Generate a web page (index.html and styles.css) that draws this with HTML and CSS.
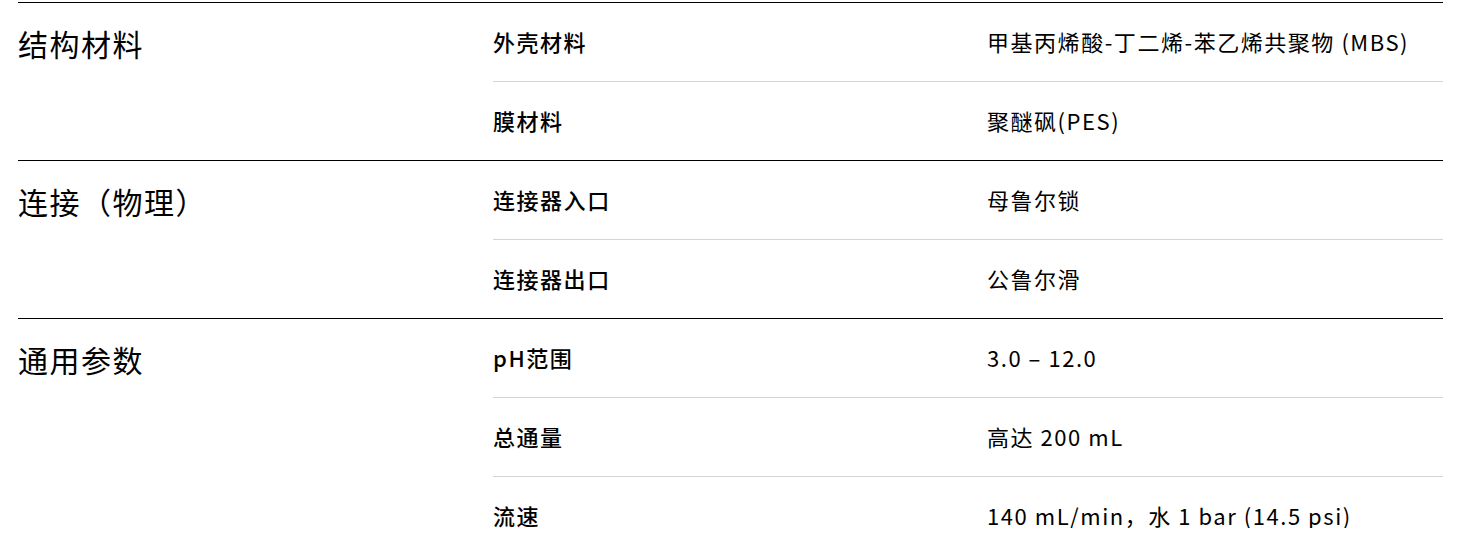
FILE: index.html
```html
<!DOCTYPE html>
<html lang="zh-CN">
<head>
<meta charset="utf-8">
<link rel="stylesheet" href="styles.css">
</head>
<body>
<div class="page">
  <div class="specs">
    <section class="group">
      <h3 class="group-title">结构材料</h3>
      <div class="rows">
        <div class="row"><div class="label">外壳材料</div><div class="value">甲基丙烯酸-丁二烯-苯乙烯共聚物 (MBS)</div></div>
        <div class="row"><div class="label">膜材料</div><div class="value">聚醚砜(PES)</div></div>
      </div>
    </section>
    <section class="group">
      <h3 class="group-title">连接（物理）</h3>
      <div class="rows">
        <div class="row"><div class="label">连接器入口</div><div class="value">母鲁尔锁</div></div>
        <div class="row"><div class="label">连接器出口</div><div class="value">公鲁尔滑</div></div>
      </div>
    </section>
    <section class="group">
      <h3 class="group-title">通用参数</h3>
      <div class="rows">
        <div class="row"><div class="label">pH范围</div><div class="value">3.0 – 12.0</div></div>
        <div class="row"><div class="label">总通量</div><div class="value">高达 200 mL</div></div>
        <div class="row"><div class="label">流速</div><div class="value">140 mL/min，水 1 bar (14.5 psi)</div></div>
      </div>
    </section>
  </div>
</div>
</body>
</html>
```

FILE: styles.css
```css
html, body {
  margin: 0;
  padding: 0;
  background: #fff;
}
body {
  font-family: "Noto Sans CJK SC", "Noto Sans", sans-serif;
  color: #000;
}
.page {
  height: 526px;
  overflow: hidden;
  padding: 2px 27px 0 18px;
}
.group {
  display: grid;
  grid-template-columns: 475px 1fr;
  border-top: 1px solid #000;
}
.group-title {
  margin: 0;
  padding-top: 22px;
  font-size: 30px;
  font-weight: 400;
  line-height: 36px;
  letter-spacing: 0.05em;
}
.rows {
  display: flex;
  flex-direction: column;
}
.row {
  display: grid;
  grid-template-columns: 494px 1fr;
  align-items: center;
  box-sizing: border-box;
  height: 78px;
  padding-bottom: 3px;
  font-size: 22px;
  line-height: 30px;
  letter-spacing: 0.07em;
}
.row + .row {
  height: 79px;
  border-top: 1px solid #d4d4d4;
}
.label {
  font-weight: 500;
}
.value {
  font-weight: 400;
}
```
